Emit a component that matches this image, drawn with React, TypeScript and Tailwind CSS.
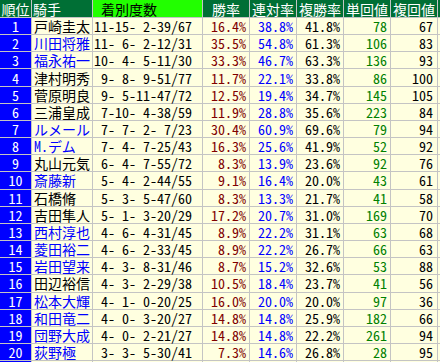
import React from 'react'

// 騎手成績テーブル（上位20名）
type Row = {
  rank: number
  name: string
  blue: boolean
  record: string
  win: string
  ren: string
  fuku: string
  tan: number
  fukuVal: number
}

const ROWS: Row[] = [
  { rank: 1, name: '戸崎圭太', blue: false, record: '11-15- 2-39/67', win: '16.4%', ren: '38.8%', fuku: '41.8%', tan: 78, fukuVal: 67 },
  { rank: 2, name: '川田将雅', blue: true, record: '11- 6- 2-12/31', win: '35.5%', ren: '54.8%', fuku: '61.3%', tan: 106, fukuVal: 83 },
  { rank: 3, name: '福永祐一', blue: true, record: '10- 4- 5-11/30', win: '33.3%', ren: '46.7%', fuku: '63.3%', tan: 136, fukuVal: 93 },
  { rank: 4, name: '津村明秀', blue: false, record: ' 9- 8- 9-51/77', win: '11.7%', ren: '22.1%', fuku: '33.8%', tan: 86, fukuVal: 100 },
  { rank: 5, name: '菅原明良', blue: false, record: ' 9- 5-11-47/72', win: '12.5%', ren: '19.4%', fuku: '34.7%', tan: 145, fukuVal: 105 },
  { rank: 6, name: '三浦皇成', blue: false, record: ' 7-10- 4-38/59', win: '11.9%', ren: '28.8%', fuku: '35.6%', tan: 223, fukuVal: 84 },
  { rank: 7, name: 'ルメール', blue: true, record: ' 7- 7- 2- 7/23', win: '30.4%', ren: '60.9%', fuku: '69.6%', tan: 79, fukuVal: 94 },
  { rank: 8, name: 'Ｍ．デム', blue: true, record: ' 7- 4- 7-25/43', win: '16.3%', ren: '25.6%', fuku: '41.9%', tan: 52, fukuVal: 92 },
  { rank: 9, name: '丸山元気', blue: false, record: ' 6- 4- 7-55/72', win: '8.3%', ren: '13.9%', fuku: '23.6%', tan: 92, fukuVal: 76 },
  { rank: 10, name: '斎藤新', blue: true, record: ' 5- 4- 2-44/55', win: '9.1%', ren: '16.4%', fuku: '20.0%', tan: 43, fukuVal: 61 },
  { rank: 11, name: '石橋脩', blue: false, record: ' 5- 3- 5-47/60', win: '8.3%', ren: '13.3%', fuku: '21.7%', tan: 41, fukuVal: 58 },
  { rank: 12, name: '吉田隼人', blue: false, record: ' 5- 1- 3-20/29', win: '17.2%', ren: '20.7%', fuku: '31.0%', tan: 169, fukuVal: 70 },
  { rank: 13, name: '西村淳也', blue: true, record: ' 4- 6- 4-31/45', win: '8.9%', ren: '22.2%', fuku: '31.1%', tan: 63, fukuVal: 68 },
  { rank: 14, name: '菱田裕二', blue: true, record: ' 4- 6- 2-33/45', win: '8.9%', ren: '22.2%', fuku: '26.7%', tan: 66, fukuVal: 63 },
  { rank: 15, name: '岩田望来', blue: true, record: ' 4- 3- 8-31/46', win: '8.7%', ren: '15.2%', fuku: '32.6%', tan: 53, fukuVal: 88 },
  { rank: 16, name: '田辺裕信', blue: false, record: ' 4- 3- 2-29/38', win: '10.5%', ren: '18.4%', fuku: '23.7%', tan: 41, fukuVal: 56 },
  { rank: 17, name: '松本大輝', blue: true, record: ' 4- 1- 0-20/25', win: '16.0%', ren: '20.0%', fuku: '20.0%', tan: 97, fukuVal: 36 },
  { rank: 18, name: '和田竜二', blue: true, record: ' 4- 0- 3-20/27', win: '14.8%', ren: '14.8%', fuku: '25.9%', tan: 182, fukuVal: 66 },
  { rank: 19, name: '団野大成', blue: true, record: ' 4- 0- 2-21/27', win: '14.8%', ren: '14.8%', fuku: '22.2%', tan: 261, fukuVal: 94 },
  { rank: 20, name: '荻野極', blue: true, record: ' 3- 3- 5-30/41', win: '7.3%', ren: '14.6%', fuku: '26.8%', tan: 28, fukuVal: 95 },
]

const head = 'flex items-center justify-center bg-[#006f35] text-white'
const cell = 'flex items-center bg-[#ffffe0]'
const num = 'flex items-center justify-end bg-[#ffffe0] pr-[3px]'

export default function App() {
  return (
    <div className="w-[440px] h-[362px] overflow-hidden bg-white">
      <div
        className="grid w-max gap-px bg-[#c4c4c4] text-[14px] leading-none whitespace-pre font-['Noto_Sans_CJK_JP','Noto_Sans_CJK_SC',sans-serif] [font-feature-settings:'hwid'] grid-cols-[31px_60px_109px_46px_46px_46px_46px_46px_60px] grid-rows-[17px_repeat(21,16.16px)]"
      >
        <div className={head}>順位</div>
        <div className={head + ' !justify-start pl-[1px]'}>騎手</div>
        <div className="flex items-center bg-[#22ff00] pl-2 text-black">着別度数</div>
        <div className={head}>勝率</div>
        <div className={head}>連対率</div>
        <div className={head}>複勝率</div>
        <div className={head}>単回値</div>
        <div className={head}>複回値</div>
        <div className={head}></div>

        {ROWS.map((r) => (
          <React.Fragment key={r.rank}>
            <div className="flex items-center justify-center bg-[#0000ff] text-white">{r.rank}</div>
            <div className={cell + ' pl-[2px] ' + (r.blue ? 'text-[#0000ff]' : 'text-black')}>{r.name}</div>
            <div className={cell + ' pl-[1px] text-black'}>{r.record}</div>
            <div className={num + ' text-[#800000]'}>{r.win}</div>
            <div className={num + ' text-[#0000ff]'}>{r.ren}</div>
            <div className={num + ' text-black'}>{r.fuku}</div>
            <div className={num + ' text-[#008000]'}>{r.tan}</div>
            <div className={num + ' text-black pr-[4px]'}>{r.fukuVal}</div>
            <div className={cell}></div>
          </React.Fragment>
        ))}

        <div className="bg-[#0000ff]"></div>
        <div className={cell}></div>
        <div className={cell}></div>
        <div className={cell}></div>
        <div className={cell}></div>
        <div className={cell}></div>
        <div className={cell}></div>
        <div className={cell}></div>
        <div className={cell}></div>
      </div>
    </div>
  )
}
